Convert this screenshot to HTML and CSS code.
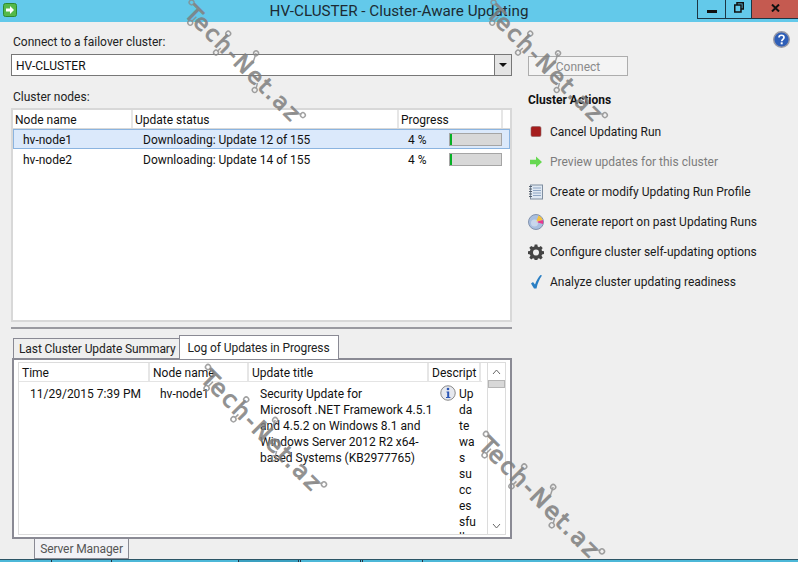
FILE: index.html
```html
<!DOCTYPE html>
<html lang="en">
<head>
  <meta charset="UTF-8">
  <title>HV-CLUSTER - Cluster-Aware Updating</title>
  <link rel="stylesheet" href="styles.css">
</head>
<body>
  <div class="window">
    <header class="titlebar">
      <svg class="app-icon" width="14" height="14" viewBox="0 0 14 14">
        <rect x="0.5" y="0.5" width="13" height="13" rx="2" fill="#55b948" stroke="#2e8b2e"/>
        <path d="M3 5.5h4V3l4 4-4 4V8.500H3z" fill="#fff"/>
      </svg>
      <span class="title">HV-CLUSTER - Cluster-Aware Updating</span>
      <div class="controls">
        <div class="ctl ctl-min"><span class="min-bar"></span></div>
        <div class="ctl ctl-max">
          <svg width="10" height="11" viewBox="0 0 10 11"><path d="M3 2.500V.75h6.250V7H7M.75 3h6.250v7H.75z" fill="none" stroke="#111" stroke-width="1.500"/></svg>
        </div>
        <div class="ctl ctl-close">
          <svg width="9" height="8" viewBox="0 0 9 8"><path d="M1 .5l7 7M8 .5l-7 7" stroke="#111" stroke-width="2"/></svg>
        </div>
      </div>
    </header>

    <div class="content">
      <main class="left">
        <label class="field-label">Connect to a failover cluster:</label>
        <div class="combo">
          <span class="combo-value">HV-CLUSTER</span>
          <span class="combo-btn"></span>
        </div>
        <label class="field-label nodes-label">Cluster nodes:</label>

        <div class="nodes">
          <div class="nodes-head">
            <span class="col-name">Node name</span>
            <span class="col-status">Update status</span>
            <span class="col-progress">Progress</span>
            <span class="col-rest"></span>
          </div>
          <div class="node-row selected">
            <span class="col-name">hv-node1</span>
            <span class="col-status">Downloading: Update 12 of 155</span>
            <span class="col-pct">4 %</span>
            <span class="bar"><span class="bar-fill"></span></span>
          </div>
          <div class="node-row">
            <span class="col-name">hv-node2</span>
            <span class="col-status">Downloading: Update 14 of 155</span>
            <span class="col-pct">4 %</span>
            <span class="bar"><span class="bar-fill"></span></span>
          </div>
        </div>

        <div class="splitter"></div>

        <div class="tabs">
          <div class="tab">Last Cluster Update Summary</div>
          <div class="tab active">Log of Updates in Progress</div>
        </div>
        <div class="tab-panel">
          <div class="log">
            <div class="log-main">
              <div class="log-head">
                <span class="log-time">Time</span>
                <span class="log-node">Node name</span>
                <span class="log-title">Update title</span>
                <span class="log-desc">Descript</span>
              </div>
              <div class="log-row">
                <span class="cell-time">11/29/2015 7:39 PM</span>
                <span class="cell-node">hv-node1</span>
                <span class="cell-title">Security Update for<br>Microsoft .NET Framework 4.5.1<br>and 4.5.2 on Windows 8.1 and<br>Windows Server 2012 R2 x64-<br>based Systems (KB2977765)</span>
                <span class="cell-icon">
                  <svg width="16" height="16" viewBox="0 0 16 16">
                    <circle cx="8" cy="8" r="7.250" fill="#e6e8ee" stroke="#8a8a8a"/>
                    <circle cx="8" cy="4" r="1.300" fill="#2a55b5"/>
                    <path d="M6.500 6.500h2.700v5.500h1.200v1h-4.400v-1h1.200V7.500h-.7z" fill="#2a55b5"/>
                  </svg>
                </span>
                <span class="cell-desc">Up<br>da<br>te<br>wa<br>s<br>su<br>cc<br>es<br>sfu<br>lly</span>
              </div>
            </div>
            <div class="scroll">
              <div class="scroll-btn">
                <svg width="9" height="6" viewBox="0 0 9 6"><path d="M1 5l3.500-4L8 5" fill="none" stroke="#666" stroke-width="1"/></svg>
              </div>
              <div class="scroll-thumb"></div>
              <div class="scroll-track"></div>
              <div class="scroll-btn">
                <svg width="9" height="6" viewBox="0 0 9 6"><path d="M1 1l3.500 4L8 1" fill="none" stroke="#666" stroke-width="1"/></svg>
              </div>
            </div>
          </div>
        </div>
      </main>

      <aside class="right">
        <div class="help-row">
          <svg width="17" height="17" viewBox="0 0 17 17">
            <circle cx="8.500" cy="8.500" r="7.800" fill="#2f5fb8" stroke="#9a9aa5" stroke-width="1.400"/>
            <path d="M6 6.500c0-3 5-3 5 0 0 1.800-2.300 1.800-2.300 3.700" fill="none" stroke="#fff" stroke-width="1.700"/>
            <rect x="7.700" y="11.300" width="2" height="2" fill="#fff"/>
          </svg>
        </div>
        <button class="connect-btn" disabled>Connect</button>
        <h2 class="actions-head">Cluster Actions</h2>
        <ul class="actions">
          <li>
            <svg width="16" height="16" viewBox="0 0 16 16"><rect x="3" y="2.500" width="10" height="10" rx="1.500" fill="#a51d1d" stroke="#8a6060" stroke-width=".6"/></svg>
            Cancel Updating Run
          </li>
          <li class="off">
            <svg width="16" height="16" viewBox="0 0 16 16"><path d="M2 5.800h6V2.500L14 8l-6 5.500v-3.300H2z" fill="#66d850"/></svg>
            Preview updates for this cluster
          </li>
          <li>
            <svg width="16" height="16" viewBox="0 0 16 16">
              <rect x="2.500" y="1" width="12" height="14" fill="#dfe8f2" stroke="#7f8ea0"/>
              <path d="M5 4h8M5 6.500h8M5 9h8M5 11.500h8" stroke="#8fa6c4"/>
              <path d="M1 2.500h3M1 5h3M1 7.500h3M1 10h3M1 12.500h3" stroke="#55606e"/>
            </svg>
            Create or modify Updating Run Profile
          </li>
          <li>
            <svg width="16" height="16" viewBox="0 0 16 16">
              <circle cx="8" cy="8" r="7.500" fill="#a9bfe0" stroke="#8393ae"/>
              <path d="M8 8l2.500-6.500A7 7 0 0 1 14.800 6z" fill="#f5c13c"/>
              <path d="M8 8l6.800-2a7 7 0 0 1 .2 4z" fill="#e8388f"/>
              <circle cx="6.500" cy="9" r="3.500" fill="#dfe7f3" opacity=".6"/>
            </svg>
            Generate report on past Updating Runs
          </li>
          <li>
            <svg width="16" height="16" viewBox="0 0 16 16">
              <path d="M6.700.5h2.600l.4 2.100 1.300.6 1.800-1.200 1.900 1.900-1.200 1.800.6 1.300 2.100.4v2.600l-2.100.4-.6 1.300 1.200 1.800-1.900 1.900-1.800-1.200-1.300.6-.4 1.900H6.700l-.4-1.900-1.300-.6-1.800 1.200-1.900-1.900 1.200-1.800-.6-1.300L-.2 9.900V7.300l2.100-.4.6-1.300-1.200-1.800 1.900-1.900L5 3.100l1.300-.6z" fill="#444"/>
              <circle cx="8" cy="8.500" r="3" fill="#efefef"/>
            </svg>
            Configure cluster self-updating options
          </li>
          <li>
            <svg width="16" height="16" viewBox="0 0 16 16"><path d="M3 9.500l2-1.500 2 2.500C8.500 6.500 10.500 3 12.500 1L14 1.500c-2.500 3.500-4.500 8-5.500 13H6z" fill="#2a7fc4"/></svg>
            Analyze cluster updating readiness
          </li>
        </ul>
      </aside>
    </div>

    <div class="taskbar">
      <span class="task seg-a"></span>
      <span class="task seg-b"></span>
      <span class="task seg-c"></span>
      <span class="task seg-d"></span>
      <span class="task seg-gap"></span>
      <span class="task seg-b"></span>
      <span class="task seg-gap"></span>
      <span class="task seg-b"></span>
      <span class="task seg-g"></span>
    </div>

    <div class="tooltip">Server Manager</div>

    <!-- watermark over the whole window -->
    <svg class="watermark" width="798" height="562" viewBox="0 0 798 562">
      <defs>
        <g id="mark">
          <text class="mark-text" x="3" y="0" textLength="158" lengthAdjust="spacing">Tech-Net.az</text>
          <g class="mark-nodes">
            <path d="M2 -15H16M14 -1V-8M50 -17V-12M55 2V-3M85 -25L90 -15M106 -6.500H100M111 1L108 -4M163 -13.600L156 -7"/>
            <circle cx="0" cy="-15" r="2.500"/>
            <circle cx="14" cy="1" r="2.500"/>
            <circle cx="50" cy="-19" r="2.500"/>
            <circle cx="55" cy="4" r="2.500"/>
            <circle cx="85" cy="-25" r="2.500"/>
            <circle cx="111" cy="3" r="2.500"/>
            <circle cx="165" cy="-14" r="2.500"/>
          </g>
        </g>
      </defs>
      <use href="#mark" transform="translate(181.400 12.600) rotate(45) scale(.96)"/>
      <use href="#mark" transform="translate(483.400 12.600) rotate(45) scale(.96)"/>
      <use href="#mark" transform="translate(197.400 377.600) rotate(45)"/>
      <use href="#mark" transform="translate(475.400 444.600) rotate(45)"/>
    </svg>
  </div>
</body>
</html>
```

FILE: styles.css
```css
* { box-sizing: border-box; }
html, body { margin: 0; padding: 0; }
body { font-family: Roboto, "Noto Sans", Arial, sans-serif; font-size: 12px; color: #111; background: #efefef; }
.window { position: relative; width: 798px; height: 562px; overflow: hidden; display: flex; flex-direction: column; background: #efefef; }

/* title bar */
.titlebar { position: relative; flex: 0 0 22px; height: 22px; background: #63c9ea; display: flex; align-items: flex-start; justify-content: center; }
.app-icon { position: absolute; left: 3px; top: 3px; }
.title { font-size: 15.200px; line-height: 23px; color: #1c2b33; }
.controls { position: absolute; top: 0; right: 0; display: flex; height: 19px; }
.ctl { display: flex; align-items: center; justify-content: center; height: 19px; border-bottom: 1px solid #1d3644; border-left: 1px solid #1d3644; }
.ctl-min { width: 28px; }
.ctl-max { width: 26px; padding-bottom: 3px; }
.ctl-close { width: 47px; background: #c55a50; padding-bottom: 3px; }
.min-bar { display: block; width: 10px; height: 3px; background: #111; margin-top: 4px; }

.content { flex: 1; display: flex; min-height: 0; }

/* left side */
.left { width: 512px; padding: 13px 0 0 11px; display: flex; flex-direction: column; }
.field-label { display: block; line-height: 14px; padding-left: 2px; color: #222; }
.combo { margin-top: 5px; height: 22px; display: flex; background: #fff; border: 1px solid #777; }
.combo-value { flex: 1; line-height: 22px; padding-left: 4px; }
.combo-btn { position: relative; width: 17px; border-left: 1px solid #777; background: #e4e4e4; }
.combo-btn::after { content: ""; position: absolute; left: 4px; top: 8px; border: 4px solid transparent; border-top: 4px solid #111; border-bottom: 0; }
.nodes-label { margin-top: 14px; }

.nodes { margin-top: 4px; height: 214px; background: #fff; border: 2px solid #d8d8d8; }
.nodes-head { display: flex; height: 19px; line-height: 21px; border-bottom: 1px solid #d8d8d8; }
.nodes-head span { padding-left: 2px; border-right: 2px solid #e6e6e6; }
.nodes-head .col-name { width: 120px; }
.nodes-head .col-status { width: 266px; }
.nodes-head .col-progress { width: 104px; }
.nodes-head .col-rest { flex: 1; border: 0; background: #fff; }
.node-row { display: flex; align-items: center; height: 20px; line-height: 20px; padding-top: 1px; border: 1px solid transparent; }
.node-row.selected { background: #dbe9fb; border-color: #8bb4e0; }
.node-row .bar { margin-top: -1px; }
.node-row .col-name { width: 119px; padding-left: 9px; }
.node-row .col-status { width: 265px; padding-left: 10px; }
.node-row .col-pct { width: 51px; padding-left: 10px; }
.bar { display: block; width: 53px; height: 13px; background: #d8d8d8; border: 1px solid #a5a5a5; }
.bar-fill { display: block; width: 2px; height: 100%; background: #06b025; }

.splitter { margin-top: 5px; height: 2px; background: #9a9aa0; }

/* tabs */
.tabs { display: flex; align-items: flex-end; margin-top: 6px; height: 23px; padding-left: 2px; position: relative; z-index: 1; letter-spacing: -.1px; }
.tab { height: 20px; line-height: 20px; padding: 0 3px 0 5px; background: #efefef; border: 1px solid #8a8a94; border-bottom: 0; border-right: 0; color: #222; }
.tab.active { height: 24px; line-height: 25px; padding: 0 8px; background: #fff; border: 1px solid #8a8a94; border-bottom: 0; margin-bottom: -1px; }
.tab-panel { margin-left: 1px; height: 181px; background: #fff; border: 2px solid #8a8a94; padding: 2px 4px 2px 4px; }

.log { display: flex; height: 100%; border: 1px solid #dcdcdc; }
.log-main { flex: 1; min-width: 0; overflow: hidden; }
.log-head { display: flex; height: 19px; line-height: 21px; border-bottom: 1px solid #e4e4e4; }
.log-head span { flex: none; padding-left: 3px; border-right: 2px solid #e6e6e6; }
.log-time { width: 131px; }
.log-node { width: 99px; }
.log-title { width: 180px; }
.log-desc { width: 52px; white-space: nowrap; overflow: hidden; }
.log-row { display: flex; line-height: 16px; padding-top: 4px; }
.log-row > span { flex: none; }
.cell-time { width: 130px; padding-left: 11px; }
.cell-node { width: 100px; padding-left: 11px; }
.cell-title { width: 191px; padding-left: 11px; white-space: nowrap; }
.cell-icon { width: 19px; display: block; margin-top: -1px; }
.cell-icon svg { display: block; }
.cell-desc { width: 21px; }

.scroll { width: 18px; display: flex; flex-direction: column; border-left: 1px solid #dcdcdc; background: #f2f2f2; margin-left: 5px; }
.scroll-btn { height: 17px; display: flex; align-items: center; justify-content: center; background: #fff; }
.scroll-thumb { height: 8px; background: #d8d8d8; border: 1px solid #b5b5b5; }
.scroll-track { flex: 1; background: #fff; }

/* right side */
.right { flex: 1; padding: 0 0 0 16px; }
.help-row { display: flex; justify-content: flex-end; padding: 9px 8px 0 0; height: 34px; }
.connect-btn { display: block; width: 100px; height: 20px; font: inherit; color: #8a8a8a; background: #f4f4f4; border: 1px solid #adadad; padding: 1px 0 0; }
.actions-head { margin: 16px 0 0; font-size: 12px; line-height: 16px; font-weight: 700; color: #111; }
.actions { list-style: none; margin: 9px 0 0; padding: 0; }
.actions li { display: flex; align-items: center; gap: 6px; height: 30px; color: #1a1a1a; }
.actions li svg { flex: none; }
.actions li.off { color: #7d7d7d; }

/* taskbar */
.taskbar { flex: 0 0 3px; display: flex; background: #4cb8d8; border-top: 1px solid #2c5566; }
.task { height: 2px; border-left: 1px solid #234; }
.seg-a { width: 51px; border-left: 0; }
.seg-b { width: 60px; }
.seg-c { width: 127px; }
.seg-d { width: 60px; background: #3aa0c0; }
.seg-gap { width: 2px; }
.seg-g { flex: 1; }

.tooltip { position: absolute; left: 34px; top: 539px; width: 95px; height: 20px; line-height: 21px; text-align: center; letter-spacing: -.1px; color: #555; background: #f2f2f6; border: 1px solid #8a8a94; border-top: 0; }

.watermark { position: absolute; left: 0; top: 0; pointer-events: none; }
.mark-text { font-family: "DejaVu Sans", sans-serif; font-size: 23px; fill: #7e7e7e; stroke: #7e7e7e; stroke-width: 1px; opacity: .85; }
.mark-nodes { opacity: .8; }
.mark-nodes circle, .mark-nodes path { fill: none; stroke: #8a8a8a; stroke-width: 1.500; }
```
